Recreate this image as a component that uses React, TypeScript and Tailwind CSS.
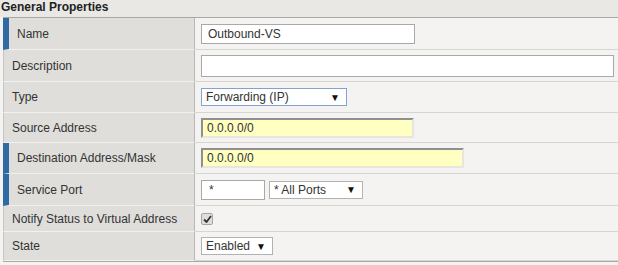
import React from "react";

const font = { fontFamily: '"Liberation Sans", Arial, sans-serif' };

function Row({
  label,
  required,
  h,
  children,
}: {
  label: string;
  required?: boolean;
  h: string;
  children: React.ReactNode;
}) {
  return (
    <div className={`flex ${h}`}>
      <div
        className={`w-[192px] shrink-0 flex items-center bg-[#dfdedb] border-r border-r-[#b9b8b5] border-b border-b-[#f2f1ef] pl-[8px] ${
          required ? "border-l-[6px] border-l-[#2f6aa3]" : "border-l border-l-[#c6c5c2]"
        }`}
      >
        <span>{label}</span>
      </div>
      <div className="flex-1 flex items-center gap-[4px] bg-[#f4f3f1] border-b border-b-[#d6d5d2] pl-[6px]">
        {children}
      </div>
    </div>
  );
}

function Select({ text, w, focus }: { text: string; w: string; focus?: boolean }) {
  return (
    <div
      className={`${w} h-[18px] flex items-center justify-between bg-white pl-[4px] pr-[6px] border ${
        focus ? "border-[#7fa3d3]" : "border-[#b2b2b2]"
      }`}
    >
      <span>{text}</span>
      <span className="text-[10px] text-[#111]">▼</span>
    </div>
  );
}

export default function App() {
  return (
    <div style={font} className="w-[618px] h-[265px] bg-[#f4f3f1] text-[12px] text-[#333] overflow-hidden">
      <div className="h-[17px] bg-[#e9e8e5] pl-[1px] font-bold leading-[15px] text-[#222]">
        General Properties
      </div>
      <div className="ml-[3px] border-t border-t-[#a8a7a4] border-b border-b-[#aaa9a6]">
        <Row label="Name" required h="h-[32px]">
          <div className="w-[214px] h-[20px] border border-[#a9a9a9] bg-white pl-[6px] flex items-center">
            Outbound-VS
          </div>
        </Row>
        <Row label="Description" h="h-[32px]">
          <div className="w-[413px] h-[22px] border border-[#a9a9a9] bg-white" />
        </Row>
        <Row label="Type" h="h-[31px]">
          <Select text="Forwarding (IP)" w="w-[146px]" focus />
        </Row>
        <Row label="Source Address" h="h-[30px]">
          <div className="w-[213px] h-[20px] bg-[#ffffc2] border-2 border-t-[#8f8f8f] border-l-[#8f8f8f] border-r-[#e6e5e0] border-b-[#e6e5e0] pl-[4px] flex items-center">
            0.0.0.0/0
          </div>
        </Row>
        <Row label="Destination Address/Mask" required h="h-[31px]">
          <div className="w-[263px] h-[20px] bg-[#ffffc2] border-2 border-t-[#8f8f8f] border-l-[#8f8f8f] border-r-[#e6e5e0] border-b-[#e6e5e0] pl-[4px] flex items-center">
            0.0.0.0/0
          </div>
        </Row>
        <Row label="Service Port" required h="h-[32px]">
          <div className="w-[64px] h-[20px] border border-[#a9a9a9] bg-white pl-[7px] flex items-center">
            *
          </div>
          <Select text="* All Ports" w="w-[94px]" />
        </Row>
        <Row label="Notify Status to Virtual Address" h="h-[26px]">
          <div className="w-[12px] h-[12px] rounded-[2px] border border-[#a5a5a5] bg-[#dedede] flex items-center justify-center">
            <svg width="9" height="8" viewBox="0 0 9 8">
              <path d="M1 4.5 L3.5 7 L8 1" fill="none" stroke="#333" strokeWidth="1.8" />
            </svg>
          </div>
        </Row>
        <Row label="State" h="h-[29px]">
          <Select text="Enabled" w="w-[72px]" />
        </Row>
      </div>
    </div>
  );
}
